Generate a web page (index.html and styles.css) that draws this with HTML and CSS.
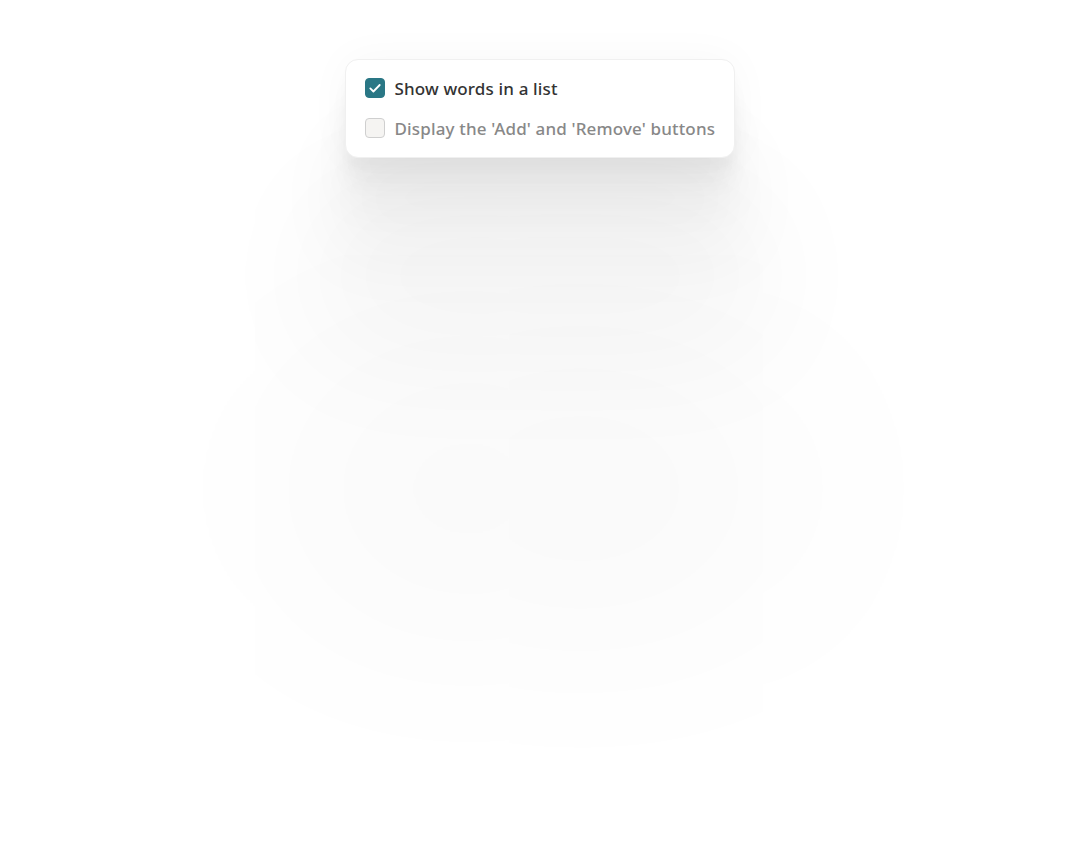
FILE: index.html
```html
<!DOCTYPE html>
<html lang="en">
<head>
<meta charset="utf-8">
<title>Options</title>
<link rel="stylesheet" href="styles.css">
</head>
<body>
<div class="page">
  <div class="card">
    <label class="option checked">
      <span class="box">
        <svg viewBox="0 0 20 20" width="20" height="20"><path d="M5.3 10.4 L8.4 13.5 L14.7 7.0" fill="none" stroke="#fff" stroke-width="1.8" stroke-linecap="round" stroke-linejoin="round"/></svg>
      </span>
      <span class="text">Show words in a list</span>
    </label>
    <label class="option">
      <span class="box"></span>
      <span class="text">Display the 'Add' and 'Remove' buttons</span>
    </label>
  </div>
</div>
</body>
</html>
```
FILE: styles.css
```css
html, body {
  margin: 0;
  padding: 0;
  background: #ffffff;
}
.page {
  display: flex;
  justify-content: center;
  padding-top: 59px;
  min-height: 845px;
  box-sizing: border-box;
}
.card {
  width: 390px;
  box-sizing: border-box;
  padding: 18px 19px 19px 19px;
  background: #fff;
  border: 1px solid #f0f0f0;
  border-radius: 13px;
  display: flex;
  flex-direction: column;
  gap: 20px;
  height: 99px;
  box-shadow:
    0 0 44px rgba(0,0,0,0.035),
    0 11px 9px rgba(0,0,0,0.02),
    0 27px 21px rgba(0,0,0,0.028),
    0 50px 40px rgba(0,0,0,0.035),
    0 89px 72px 10px rgba(0,0,0,0.04),
    0 167px 134px 30px rgba(0,0,0,0.04),
    0 380px 300px 50px rgba(0,0,0,0.045);
}
.option {
  display: flex;
  align-items: center;
  gap: 10px;
  height: 20px;
  font-family: "Noto Sans", "Open Sans", sans-serif;
  font-weight: 500;
  font-size: 17px;
  letter-spacing: 0.15px;
  color: #333333;
}
.option .text { white-space: nowrap; }
.option:not(.checked) .text { color: #888888; }
.box {
  width: 20px;
  height: 20px;
  box-sizing: border-box;
  border-radius: 4px;
  border: 1px solid #cfcfcf;
  background: #f5f4f2;
  flex: none;
  display: block;
}
.checked .box {
  background: #2a7785;
  border-color: #2a7785;
}
.box svg { display: block; margin: -1px; }
```
